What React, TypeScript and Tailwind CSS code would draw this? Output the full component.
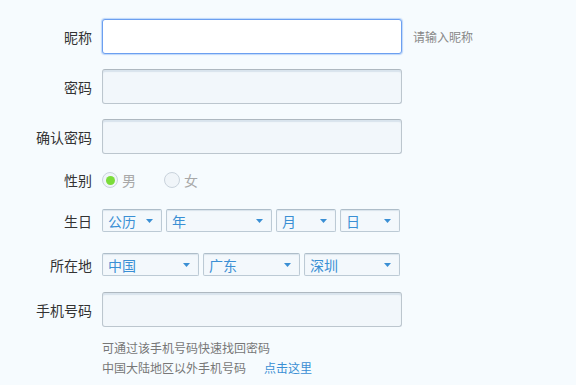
import React from 'react';

const font = { fontFamily: '"Noto Sans CJK SC", "Noto Sans", sans-serif' };

function Label({ children }: { children: React.ReactNode }) {
  return (
    <div className="w-[92px] shrink-0 text-right text-[14px] leading-[18px] text-[#333]">
      {children}
    </div>
  );
}

function TextBox({ focused }: { focused?: boolean }) {
  return (
    <div
      className={
        focused
          ? 'ml-[10px] h-[35px] w-[300px] rounded-[3px] border border-[#6c9ff0] bg-white shadow-[0_0_1px_1px_rgba(120,170,245,0.45)]'
          : 'ml-[10px] h-[35px] w-[300px] rounded-[3px] border border-[#bcc6ce] border-t-[#aeb8c0] bg-[#f2f7fb] shadow-[inset_0_2px_1px_rgba(200,215,228,0.6)]'
      }
    />
  );
}

function Select({ text, width }: { text: string; width: string }) {
  return (
    <div
      className={`${width} flex h-[23px] items-center justify-between rounded-[2px] border border-[#bccad5] border-t-[#aebdc9] bg-[#f3f8fc] pl-[5px] pr-[8px] text-[14px] text-[#3a8fd4] shadow-[inset_0_1px_1px_rgba(210,222,232,0.8)]`}
    >
      <span className="leading-none">{text}</span>
      <svg width="7" height="4" viewBox="0 0 7 4">
        <path d="M0 0H7L3.5 4Z" fill="#3a8fd4" />
      </svg>
    </div>
  );
}

function Radio({ checked, label }: { checked?: boolean; label: string }) {
  return (
    <div className="flex items-center">
      <div className="flex h-[16px] w-[16px] items-center justify-center rounded-full border border-[#c9d3dc] bg-[#f0f5f9]">
        {checked && <div className="h-[9px] w-[9px] rounded-full bg-[#7bdc3a]" />}
      </div>
      <span className="ml-[4px] text-[14px] leading-none text-[#a8a8a8]">{label}</span>
    </div>
  );
}

export default function App() {
  return (
    <div className="h-[385px] w-[576px] bg-[#f6fbfe] pt-[19px]" style={font}>
      <div className="flex items-center">
        <Label>昵称</Label>
        <TextBox focused />
        <span className="ml-[11px] text-[12px] text-[#888]">请输入昵称</span>
      </div>
      <div className="mt-[15px] flex items-center">
        <Label>密码</Label>
        <TextBox />
      </div>
      <div className="mt-[15px] flex items-center">
        <Label>确认密码</Label>
        <TextBox />
      </div>
      <div className="mt-[18px] flex h-[16px] items-center">
        <Label>性别</Label>
        <div className="ml-[10px] flex items-center gap-[28px]">
          <Radio checked label="男" />
          <Radio label="女" />
        </div>
      </div>
      <div className="mt-[21px] flex h-[23px] items-center">
        <Label>生日</Label>
        <div className="ml-[10px] flex gap-[4px]">
          <Select text="公历" width="w-[60px]" />
          <Select text="年" width="w-[106px]" />
          <Select text="月" width="w-[60px]" />
          <Select text="日" width="w-[60px]" />
        </div>
      </div>
      <div className="mt-[21px] flex h-[23px] items-center">
        <Label>所在地</Label>
        <div className="ml-[10px] flex gap-[4px]">
          <Select text="中国" width="w-[97px]" />
          <Select text="广东" width="w-[97px]" />
          <Select text="深圳" width="w-[96px]" />
        </div>
      </div>
      <div className="mt-[16px] flex items-center">
        <Label>手机号码</Label>
        <TextBox />
      </div>
      <div className="ml-[102px] mt-[11px] text-[12px] leading-[20px] text-[#777]">
        <div>可通过该手机号码快速找回密码</div>
        <div className="flex">
          <span>中国大陆地区以外手机号码</span>
          <span className="ml-[18px] text-[#3a8fd4]">点击这里</span>
        </div>
      </div>
    </div>
  );
}
